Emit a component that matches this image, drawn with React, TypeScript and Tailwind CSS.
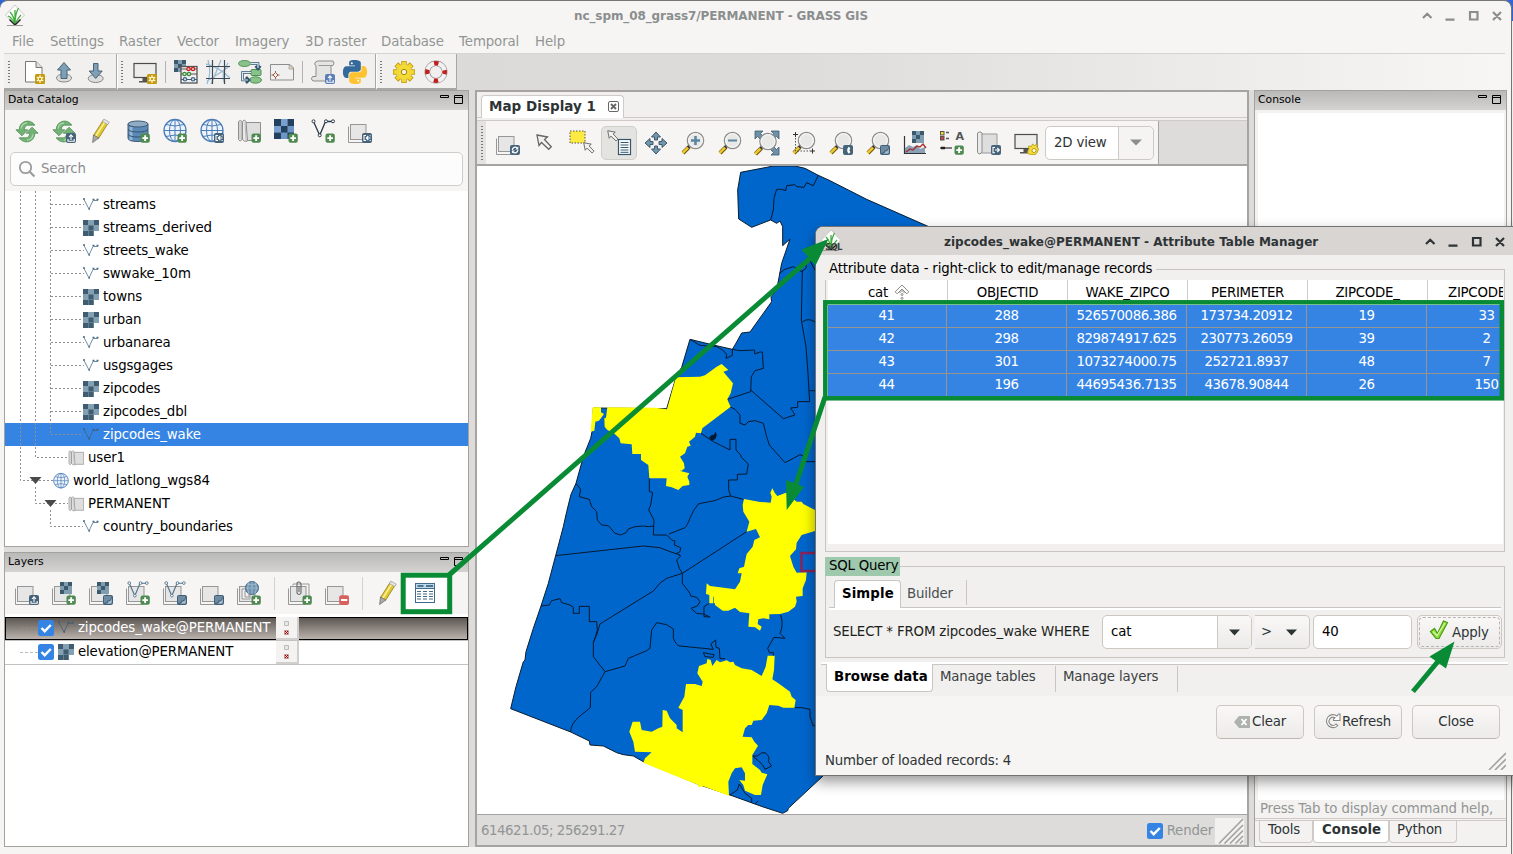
import React from "react";

type Kids = { children?: React.ReactNode };

const Icon = ({ children }: Kids) => (
  <svg width="24" height="24" viewBox="0 0 24 24" fill="none" className="block shrink-0 overflow-visible">
    {children}
  </svg>
);

const Plus = () => (
  <g>
    <rect x="14.5" y="14.5" width="9.3" height="9.3" rx="2" fill="#4f8a50" />
    <path d="M19.15 16.3v5.7M16.3 19.15h5.7" stroke="#fff" strokeWidth="1.9" />
  </g>
);
const Badge = ({ children, fill = "#45637a" }: Kids & { fill?: string }) => (
  <g>
    <rect x="14" y="14" width="10" height="10" rx="2" fill={fill} />
    {children}
  </g>
);
const UpBadge = ({ fill }: { fill?: string }) => (
  <Badge fill={fill}>
    <path d="M19 21v-4.5M17 18l2-2.2 2 2.2M16 20v2.2h6.2V20" stroke="#fff" strokeWidth="1.1" />
  </Badge>
);
const LinkBadge = () => (
  <Badge>
    <path d="M18 16.5h-2v5h2M22.5 19h-4M20.3 17l-2 2 2 2M22.2 16.3v1M22.2 21v1" stroke="#fff" strokeWidth="1.1" />
  </Badge>
);
const PageBadge = () => (
  <g>
    <rect x="14" y="14" width="10" height="10" rx="2" fill="#3f5f79" />
    <path d="M22.8 15.2c.2 3.6-1.4 5.4-3.6 5.4.2 1.2-.8 2.2-3.4 2.2h5.6q1.4 0 1.4-1.4z" fill="#a9bccb" />
    <path d="M15 15h7.5c0 3-1.5 4.5-4 4.5q0 2-3.5 2.5z" fill="#6e8ba1" />
  </g>
);
const GearBadge = () => (
  <g>
    <rect x="14" y="14" width="10" height="10" rx="1.5" fill="#c39a0e" />
    <path d="M19 15.3v7.4M15.8 17.1l6.4 3.7M15.8 20.9l6.4-3.7" stroke="#fff7cf" strokeWidth="1.5" />
    <circle cx="19" cy="19" r="2.3" fill="#fff7cf" />
    <circle cx="19" cy="19" r="1.2" fill="#c39a0e" />
  </g>
);
const Sheets = () => (
  <g stroke="#979797">
    <path d="M.5 7.5v16h17" strokeWidth="1" />
    <rect x="2.5" y="5.5" width="15.5" height="15" fill="#e6e6e6" />
  </g>
);
const Checker = ({ x, y, s, dark = "#3d5a6c", light = "#7f9db0" }: { x: number; y: number; s: number; dark?: string; light?: string }) => (
  <g>
    <rect x={x} y={y} width={s * 3} height={s * 3} fill={light} />
    <path
      d={`M${x} ${y}h${s}v${s}h${-s}zM${x + 2 * s} ${y}h${s}v${s}h${-s}zM${x + s} ${y + s}h${s}v${s}h${-s}zM${x} ${y + 2 * s}h${s}v${s}h${-s}z`}
      fill={dark}
    />
  </g>
);
const VLine = ({ c = "#2b3a48" }: { c?: string }) => (
  <g stroke={c} strokeWidth="1.3">
    <path d="M2.5 2.5L8.7 16.3 14.5 2.5H22" />
    <g fill="#fff" strokeWidth="1">
      <circle cx="2.5" cy="2.3" r="1.5" />
      <circle cx="8.7" cy="16.3" r="1.5" />
      <circle cx="15" cy="2.3" r="1.5" />
      <circle cx="22" cy="2.3" r="1.5" />
    </g>
  </g>
);
const Globe = () => (
  <g stroke="#4a7db8" strokeWidth="1">
    <circle cx="12" cy="11.5" r="11" fill="#edf3fa" strokeWidth="1.3" />
    <ellipse cx="12" cy="11.5" rx="5.5" ry="11" />
    <path d="M12 .5v22M1 11.5h22M3 5.5q9 3 18 0M3 17.5q9-3 18 0" />
  </g>
);
const Pencil = () => (
  <g>
    <path d="M4.5 16.5L14.5.8l5 2.8L9.5 19.5z" fill="#e0c62f" stroke="#8e7c20" strokeWidth=".8" />
    <path d="M6.5 17.5L16.5 2" stroke="#fbf19a" strokeWidth="1.5" />
    <path d="M13.3 2.6l1.7-2.5 5.4 3-1.6 2.5z" fill="#e3e0e0" stroke="#999" strokeWidth=".6" />
    <path d="M4.5 16l-.9 7.6L9.8 19z" fill="#aaa" stroke="#666" strokeWidth=".7" />
  </g>
);
const Recycle = () => (
  <g fill="#74b176" stroke="#4f9155" strokeWidth=".8" strokeLinejoin="round">
    <path d="M19.8 6.200C17.500 2.600 13.500 1.400 10 2.500 6.500 3.500 4.300 6.600 4.200 10.800H.900L7 16.800l5.800-6H9.300C9.300 8.300 10.500 6.600 12.500 6.200z" />
    <path d="M4.200 18.800C6.500 22.400 10.500 23.600 14 22.500c3.500-1 5.700-4.100 5.800-8.300h3.300L17 8.200l-5.800 6h3.500c0 2.500-1.200 4.200-3.200 4.600z" />
    <path d="M6 9.800Q6.500 4.500 12 3.800M18 15.200q-.5 5.300-6 6" stroke="#aedbab" strokeWidth="1.2" fill="none" />
  </g>
);
const Mapset = () => (
  <g stroke="#8e8e8e" strokeWidth="1">
    <path d="M8 3.5h15.5v18H10z" fill="#dedede" />
    <path d="M1.5 2.5q1.500-2 3.500 0v18q-2 3-3.500 0zM9 2.500q-2-3-3.500 0v18q2 3 5 1.500z" fill="#e9e9e9" />
    <path d="M3 3v17M8 3l1 18" stroke="#bbb" />
  </g>
);
const Arrow = ({ x = 0, y = 0, k = 1 }: { x?: number; y?: number; k?: number }) => (
  <path
    transform={`translate(${x} ${y}) scale(${k})`}
    d="M1 1l10.500 2-3 2.500 6.800 7.200-2.600 2.600L5.500 8.500 3 11.500z"
    fill="#f2f1ee"
    stroke="#666"
    strokeWidth="1.3"
  />
);
const Lens = () => (
  <g>
    <path d="M2 22l6-6" stroke="#6a5a10" strokeWidth="4" />
    <path d="M1.5 22.2l6-6" stroke="#f3c92f" strokeWidth="2.5" />
    <path d="M7 16.5l3.5-3.5" stroke="#333" strokeWidth="3" />
    <circle cx="14.5" cy="9.5" r="8.2" fill="#e8e8e6" stroke="#8b8b8b" strokeWidth="1.2" />
    <circle cx="14.5" cy="9.5" r="6.8" stroke="#fafafa" strokeWidth=".9" />
  </g>
);
const Monitor = () => (
  <g>
    <path d="M9.500 18h5v3h3v1.500H6V21h3.500z" fill="#555" />
    <rect x="1" y="3.5" width="22" height="14" fill="#ececea" stroke="#4c4c4c" strokeWidth="1.2" />
  </g>
);

const HandleV = ({ h = "h-[22px]" }: { h?: string }) => (
  <div className={`${h} w-[2px] shrink-0 bg-[repeating-linear-gradient(to_bottom,#777_0,#777_1.5px,transparent_1.5px,transparent_3px)]`} />
);
const Sep = ({ h = "h-[22px]", c = "bg-[#b3b2b0]" }: { h?: string; c?: string }) => <div className={`w-px shrink-0 ${h} ${c}`} />;

const TopBar = () => (
  <div className="ml-1 mr-[6px] flex h-[37px] items-start border-t border-[#d5d4d1] bg-gradient-to-r from-[#dad9d7] via-[#dcdbd9] to-[#f7f6f5]">
    <div className="flex h-[36px] w-[113px] items-center gap-2 border-b-2 border-r border-[#a8a7a5] bg-[#f1f0ee] pl-1 pt-[2px]">
      <HandleV />
      <div className="ml-[3px]">
        <Icon>
          <path d="M4.500 1.500h10.500l6 6v14.500H4.500z" fill="#fff" stroke="#777" />
          <path d="M15 1.500v6h6" fill="#ddd" stroke="#777" />
          <GearBadge />
        </Icon>
      </div>
      <Icon>
        <ellipse cx="11" cy="18" rx="7.5" ry="4" fill="#ddd" stroke="#888" />
        <path d="M8 18.500V10H4.500L11 2.500 17.500 10H14v8.500z" fill="#7f9fb5" stroke="#45637a" />
      </Icon>
      <Icon>
        <ellipse cx="10.7" cy="18.5" rx="7.5" ry="4" fill="#ddd" stroke="#888" />
        <path d="M8.500 3.500V11H4.200l6.500 7.500 6.500-7.500H13V3.500z" fill="#7f9fb5" stroke="#45637a" />
      </Icon>
    </div>
    <div className="flex h-[36px] w-[259px] items-center gap-2 border-b-2 border-l border-r border-b-[#a8a7a5] border-l-white border-r-[#a8a7a5] bg-[#f1f0ee] pl-[3px] pt-[2px]">
      <HandleV />
      <div className="ml-[2px]"><Icon><Monitor /><GearBadge /></Icon></div>
      <Sep />
      <Icon>
        <Checker x={0} y={0} s={4} />
        <rect x="7" y="6.5" width="16" height="16.5" fill="#f0eeee" stroke="#555" strokeWidth="1.3" />
        <path d="M7 9h16M7 14h16M7 19.500h16" stroke="#555" />
        <g strokeWidth="1.2">
          <circle cx="14.5" cy="9" r="1.7" fill="#f7bbbb" stroke="#c22" /><circle cx="19" cy="9" r="1.7" fill="#f7bbbb" stroke="#c22" />
          <circle cx="10.5" cy="14" r="1.7" fill="#cfe8cf" stroke="#3c8a3c" /><circle cx="15" cy="14" r="1.7" fill="#cfe8cf" stroke="#3c8a3c" />
          <circle cx="11" cy="19.3" r="1.7" fill="#cfe0ee" stroke="#39698f" /><circle cx="19" cy="19.3" r="1.7" fill="#cfe0ee" stroke="#39698f" />
        </g>
      </Icon>
      <Icon>
        <path d="M2 0q4 13-1 24M15 0q-5 13-10 24M22 3q-8 12-3 21M0 4q13 3 24 14M1 21q10-6 23-15" stroke="#9bbbd3" strokeWidth="1.3" />
        <path d="M6.500 0v24M18.500 0v24M0 6.500h24M0 18.500h24" stroke="#3d4a55" strokeWidth="1.2" />
      </Icon>
      <Icon>
        <g fill="#8ac28b" stroke="#4d9350"><ellipse cx="6.5" cy="3.5" rx="6" ry="3" /><rect x="13" y="9.5" width="10" height="6" rx="1" /><ellipse cx="17.5" cy="20" rx="6" ry="3.2" /></g>
        <path d="M12.500 3.500H20v4M17.500 6l2.500 3 2.500-3M13 12.500H4.500V20h5M8 17l3 3-3 3" stroke="#33576e" strokeWidth="2.6" />
        <path d="M12.500 3.500H20v4.500M13 12.500H4.500V20h5.500" stroke="#dce8f0" strokeWidth="1.2" />
      </Icon>
      <Icon>
        <path d="M.5 4.500H20l3.500 3.500v12H.5z" fill="#f0efef" stroke="#8d8d8d" />
        <path d="M19 4.500v4.500h4.500z" fill="#ead5c1" stroke="#999" strokeWidth=".7" />
        <path d="M5.500 11v8M1.500 15h8" stroke="#9c5a3c" /><path d="M5.500 12.500L8 15l-2.500 2.500L3 15z" fill="#f0efef" stroke="#9c5a3c" />
      </Icon>
      <Sep />
      <Icon>
        <path d="M4.500 2Q7 .5 9 1h13q2 2 0 4.500h-2V21H2q-3-2-.5-4.500H5V6Q2.500 4 4.500 2z" fill="#e4e4e3" stroke="#8b8b8b" />
        <path d="M7.500 5.500h13" stroke="#999" /><UpBadge fill="#5b7db5" />
      </Icon>
      <Icon>
        <path fill="#34699a" d="M14.250.18l.9.2.73.26.59.3.45.32.34.34.25.34.16.33.1.3.04.26.02.2-.01.13V8.500l-.05.63-.13.55-.21.46-.26.38-.3.31-.33.25-.35.19-.35.14-.33.1-.3.07-.26.04-.21.02H8.770l-.69.05-.59.14-.5.22-.41.27-.33.32-.27.35-.2.36-.15.37-.1.35-.07.32-.04.27-.02.21v3.060H3.170l-.21-.03-.28-.07-.32-.12-.35-.18-.36-.26-.36-.36-.35-.46-.32-.59-.28-.73-.21-.88-.14-1.050-.05-1.230.06-1.220.16-1.040.24-.87.32-.71.36-.57.4-.44.42-.33.42-.24.4-.16.36-.1.32-.05.24-.01h.16l.06.01h8.160v-.83H6.180l-.01-2.750-.02-.37.05-.34.11-.31.17-.28.25-.26.31-.23.38-.2.44-.18.51-.15.58-.12.64-.1.71-.06.77-.04.84-.02 1.270.05z" />
        <path fill="#ffc331" d="M21.040 6.110l.28.06.32.12.35.18.36.27.36.35.35.47.32.59.28.73.21.88.14 1.040.05 1.230-.06 1.230-.16 1.040-.24.86-.32.71-.36.57-.4.45-.42.33-.42.24-.4.16-.36.09-.32.05-.24.02-.16-.01h-8.220v.82h5.840l.01 2.760.02.36-.05.34-.11.31-.17.29-.25.25-.31.24-.38.2-.44.17-.51.15-.58.13-.64.09-.71.07-.77.04-.84.01-1.270-.04-1.070-.14-.9-.2-.73-.25-.59-.3-.45-.33-.34-.34-.25-.34-.16-.33-.1-.3-.04-.25-.02-.2.01-.13v-5.340l.05-.64.13-.54.21-.46.26-.38.3-.32.33-.24.35-.2.35-.14.33-.1.3-.06.26-.04.21-.02.13-.01h5.840l.69-.05.59-.14.5-.21.41-.28.33-.32.27-.35.2-.36.15-.36.1-.35.07-.32.04-.28.02-.21V6.070h2.090z" />
        <circle cx="8.8" cy="3.2" r="1" fill="#fff" /><circle cx="15.2" cy="20.8" r="1" fill="#fff" />
      </Icon>
    </div>
    <div className="flex h-[36px] w-[81px] items-center gap-2 border-b-2 border-l border-r border-b-[#a8a7a5] border-l-white border-r-[#a8a7a5] bg-[#f1f0ee] pl-[3px] pt-[2px]">
      <HandleV />
      <div className="ml-[2px]">
        <Icon>
          <g stroke="#c09a10" strokeWidth="5.5"><path d="M12 1v22M1 12h22M4.300 4.300l15.400 15.400M4.300 19.700L19.700 4.300" /></g>
          <g stroke="#f2d22e" strokeWidth="4"><path d="M12 1.700v20.600M1.700 12h20.600M4.800 4.800l14.400 14.400M4.800 19.200L19.200 4.800" /></g>
          <circle cx="12" cy="12" r="7.5" fill="#f4da35" /><circle cx="12" cy="12" r="2.7" fill="#f6f3e6" stroke="#a98708" />
        </Icon>
      </div>
      <Icon>
        <circle cx="12" cy="12" r="8.7" stroke="#8a8a8a" strokeWidth="5.5" />
        <circle cx="12" cy="12" r="8.7" stroke="#f1f1f1" strokeWidth="4.2" />
        <circle cx="12" cy="12" r="8.7" stroke="#c31d1d" strokeWidth="4.4" strokeDasharray="4.4 9.266" strokeDashoffset="2.2" />
      </Icon>
    </div>
  </div>
);

const Caption = ({ title }: { title: string }) => (
  <div className="flex h-[19px] shrink-0 items-start justify-between bg-gradient-to-b from-[#b9b9b7] to-[#d4d3d1] pl-[3px] pr-[5px]">
    <span className="text-[10.8px] leading-[17px] tracking-normal text-black">{title}</span>
    <svg width="23" height="12" viewBox="0 0 23 12" fill="none" stroke="#000" className="mt-[2px]">
      <path d="M.5 2.500h8v2h-8zM14.500 2.500h8v8h-8zM14.500 4.500h8" />
    </svg>
  </div>
);

const VectorIcon = ({ c = "#6f8ea6", c2 = "#4b6a82" }: { c?: string; c2?: string }) => (
  <svg width="16" height="16" viewBox="0 0 16 16" fill="none" className="block shrink-0">
    <path d="M1 2.500l5 9.500 4-8.500h5" stroke={c} strokeWidth="1" />
    <path d="M0 2h2M9.500 2.500h2M13.500 2.500h2M5.500 12h1.500" stroke={c2} strokeWidth="1.6" />
  </svg>
);
const RasterIcon = () => (
  <svg width="16" height="16" viewBox="0 0 16 16" className="block shrink-0">
    <path d="M0 0h16v11h-5v5H0z" fill="#84a0b3" />
    <path d="M0 0h5v5H0zM11 0h5v5h-5zM5.500 5.500h5v5h-5zM0 11h5v5H0zM5.500 11h5v5h-5z" fill="#3f5c70" />
  </svg>
);
const FolderIcon = () => (
  <svg width="16" height="16" viewBox="0 0 24 24" fill="none" className="block shrink-0"><Mapset /></svg>
);
const GlobeIcon = () => (
  <svg width="16" height="16" viewBox="0 0 24 24" fill="none" className="block shrink-0"><Globe /></svg>
);

const nodes: { name: string; kind: "v" | "r" | "m" | "g"; depth: number }[] = [
  { name: "streams", kind: "v", depth: 3 },
  { name: "streams_derived", kind: "r", depth: 3 },
  { name: "streets_wake", kind: "v", depth: 3 },
  { name: "swwake_10m", kind: "v", depth: 3 },
  { name: "towns", kind: "r", depth: 3 },
  { name: "urban", kind: "r", depth: 3 },
  { name: "urbanarea", kind: "v", depth: 3 },
  { name: "usgsgages", kind: "v", depth: 3 },
  { name: "zipcodes", kind: "r", depth: 3 },
  { name: "zipcodes_dbl", kind: "r", depth: 3 },
  { name: "zipcodes_wake", kind: "v", depth: 3 },
  { name: "user1", kind: "m", depth: 2 },
  { name: "world_latlong_wgs84", kind: "g", depth: 1 },
  { name: "PERMANENT", kind: "m", depth: 2 },
  { name: "country_boundaries", kind: "v", depth: 3 },
];

const Tree = () => (
  <div className="relative min-h-0 flex-1 overflow-hidden bg-white pt-[2px]">
    {nodes.map((n) => {
      const sel = n.name === "zipcodes_wake";
      const pad = n.depth === 3 ? "pl-[78px]" : n.depth === 2 ? "pl-[63px]" : "pl-[48px]";
      return (
        <div key={n.name} className={`flex h-[23px] items-center gap-1 ${pad} ${sel ? "bg-[#3584e4] text-white" : "text-black"}`}>
          {n.kind === "v" ? <VectorIcon c={sel ? "#3f6890" : undefined} c2={sel ? "#3b5f83" : undefined} /> : n.kind === "r" ? <RasterIcon /> : n.kind === "m" ? <FolderIcon /> : <GlobeIcon />}
          <span className="tracking-[-0.12px]">{n.name}</span>
        </div>
      );
    })}
    <svg width="90" height="355" viewBox="5 191 90 355" fill="none" className="absolute left-0 top-0">
      <g stroke="#8f8f8f" strokeDasharray="2 2">
        <path d="M20.500 191V480.500H53M35.500 191V457.500H68M50.500 191V434.500H83M35.500 487V503.500H68M50.500 510V526.500H83" />
        <path d="M51 204.500h33M51 227.500h33M51 250.500h33M51 273.500h33M51 296.500h33M51 319.500h33M51 342.500h33M51 365.500h33M51 388.500h33M51 411.500h33" />
      </g>
      <path d="M29.500 477h12l-6 7zM44.500 500h12l-6 7z" fill="#4a4a4a" />
    </svg>
  </div>
);

const Catalog = () => (
  <div className="flex h-[457px] flex-col border border-[#a3a29f] bg-[#f6f5f3]">
    <Caption title="Data Catalog" />
    <div className="flex h-[42px] items-center gap-[13px] pl-[10px]">
      <Icon><Recycle /></Icon>
      <Icon><Recycle /><UpBadge /></Icon>
      <Icon><Pencil /></Icon>
      <Icon>
        <path d="M2 5v14q0 3.500 10 3.500T22 19V5z" fill="#5d89b6" stroke="#3d5c78" />
        <path d="M5 8v13" stroke="#93b5d8" strokeWidth="3" />
        <ellipse cx="12" cy="5" rx="10" ry="3" fill="#92abc4" stroke="#3d5c78" />
        <path d="M2 10.500q2 2.500 10 2.500t10-2.500M2 15.500q2 2.500 10 2.500t10-2.500" stroke="#34536f" />
        <Plus />
      </Icon>
      <Icon><Globe /><Plus /></Icon>
      <Icon><Globe /><LinkBadge /></Icon>
      <Icon><Mapset /><Plus /></Icon>
      <Icon>
        <rect width="20" height="20" fill="#6d95c6" />
        <path d="M0 0h7v7H0zM13.500 0h6.500v7h-6.500zM7 7h6.500v6.500H7zM0 13.500h7V20H0zM13.500 13.500H20V20h-6.500z" fill="#23405f" />
        <path d="M7 0h6.500v7H7zM0 7h7v6.500H0z" fill="#84a8d4" opacity=".6" />
        <Plus />
      </Icon>
      <Icon><VLine /><Plus /></Icon>
      <Icon><Sheets /><LinkBadge /></Icon>
    </div>
    <div className="mx-[5px] flex h-[34px] items-center gap-[5px] rounded-[5px] border border-[#cfccc9] bg-[#fcfcfc] pl-[7px] text-[#8b8e8f]">
      <svg width="18" height="18" viewBox="0 0 18 18" fill="none" stroke="#9b9d9d" strokeWidth="1.8"><circle cx="7.5" cy="7.5" r="5.7" /><path d="M11.500 11.500l5 5" strokeWidth="2.2" /></svg>
      <span>Search</span>
    </div>
    <div className="h-[5px]" />
    <Tree />
  </div>
);

const LayerRow = ({ name, kind, active }: { name: string; kind: "v" | "r"; active?: boolean }) => (
  <div className="flex h-[24px] items-center border-b border-[#c4c3c1] bg-white">
    <div
      className={`flex h-[23px] w-[271px] shrink-0 items-center ${active ? "border border-r-0 border-black bg-gradient-to-b from-[#5e5854] to-[#bab3ad] pb-[2px] pl-[14px] text-white" : "pb-[1px] pl-[15px] text-black"}`}
    >
      <span className={`w-[18px] shrink-0 border-t border-dashed ${active ? "border-[#8c8782]" : "border-[#bbb]"}`} />
      <svg width="16" height="16" viewBox="0 0 16 16" fill="none" className="mr-1 shrink-0">
        <rect width="16" height="16" rx="2.5" fill="#3584e4" />
        <path d="M3.500 8l3.200 3.200L12.800 5" stroke="#fff" strokeWidth="2.4" />
      </svg>
      {kind === "v" ? <VectorIcon c="#4c6274" c2="#445a6c" /> : <RasterIcon />}
      <span className="ml-1 whitespace-nowrap tracking-[-0.14px]">{name}</span>
    </div>
    <div className="flex h-[23px] w-[23px] shrink-0 flex-col items-center justify-center border-b-2 border-r-2 border-[#d0cfcd] bg-[#f4f3f1]">
      <svg width="6" height="14" viewBox="0 0 6 14"><path d="M.5.5h4v4h-4z" fill="#e8e8e8" stroke="#bbb" /><path d="M.5 9.500h4v4h-4z" fill="#e8c8c8" stroke="#b99" /><path d="M1 10l3 3M4 10l-3 3" stroke="#a00" /></svg>
    </div>
    <div className={`h-[23px] flex-1 ${active ? "border border-l-0 border-black bg-gradient-to-b from-[#5e5854] to-[#bab3ad]" : ""}`} />
  </div>
);

const Layers = () => (
  <div className="flex h-[295px] flex-col border border-[#a3a29f] bg-white">
    <Caption title="Layers" />
    <div className="flex h-[42px] items-center gap-[13px] bg-[#f6f5f3] pl-[10px]">
      <Icon><Sheets /><UpBadge /></Icon>
      <Icon><Sheets /><Checker x={8} y={1} s={4} /><Plus /></Icon>
      <Icon><Sheets /><Checker x={8} y={1} s={4} /><PageBadge /></Icon>
      <Icon><Sheets /><g transform="translate(1 0) scale(.9)"><VLine c="#527590" /></g><Plus /></Icon>
      <Icon><Sheets /><g transform="translate(1 0) scale(.9)"><VLine c="#527590" /></g><PageBadge /></Icon>
      <Icon><Sheets /><PageBadge /></Icon>
      <Icon>
        <Sheets /><path d="M5 8h8v10H5zM8 10h4v6H8z" fill="#eee" stroke="#999" />
        <circle cx="15" cy="7" r="6.5" fill="#6f93b0" stroke="#3f6685" /><path d="M15 .5v13M8.500 7h13M10 3q5 2 10 0M12 1q-3 6 0 12M18 1q3 6 0 12" stroke="#a8c1d4" strokeWidth=".8" />
        <Plus />
      </Icon>
      <Sep h="h-[33px]" c="bg-[#d4d2cf]" />
      <Icon><Sheets /><path d="M5 4.500V3h16v15h-2" stroke="#999" /><path d="M9 5v7q2 3 4 0V3q-1.500-3.500-4-1v3M11 5v6" stroke="#666" strokeWidth="1.1" /><Plus /></Icon>
      <Icon><Sheets /><rect x="14.2" y="14.2" width="9.8" height="9.8" rx="2" fill="#d8605f" /><path d="M16 19h6.300" stroke="#fff" strokeWidth="2" /></Icon>
      <Sep h="h-[33px]" c="bg-[#d4d2cf]" />
      <Icon><Pencil /></Icon>
      <div className="-ml-[10px] mt-[2px] flex h-[36px] w-[46px] items-center justify-center bg-white pr-[2px]">
        <Icon>
          <rect x="2.5" y="1.5" width="19" height="19" fill="#fff" stroke="#456a87" />
          <path d="M3 2h18v4H3z" fill="#b9dbf0" /><path d="M4.500 4h6M13 4h7" stroke="#2f516c" strokeWidth="1.7" />
          <path d="M3 6.500h18" stroke="#456a87" />
          <path d="M4 9.500h4M10 9.500h4M16 9.500h4M4 12h4M10 12h4M16 12h4M4 14.500h4M10 14.500h4M16 14.500h4M4 17h4M10 17h4M16 17h4" stroke="#456a87" strokeWidth="1.2" />
        </Icon>
      </div>
    </div>
    <div className="h-[3px]" />
    <LayerRow name="zipcodes_wake@PERMANENT" kind="v" active />
    <LayerRow name="elevation@PERMANENT" kind="r" />
  </div>
);

const MapCanvas = () => (
  <svg viewBox="477 166 770 648" width="770" height="648" className="block bg-white" fill="none">
    <g transform="translate(500 160) scale(.33333)" strokeLinejoin="round">
      <path
        d="M722 37L800 22 820 18H885L915 25 955 46 990 62 1100 118 1284 199 1500 300 1500 1500 1100 1720 969 1848 865 1945 863 1952 848 1960 787 1940 690 1905 600 1875 540 1850 430 1805 400 1788 370 1784 350 1778 310 1758 270 1755 268 1743 212 1716 32 1646 48 1580 70 1505 75 1500 78 1475 100 1405 123 1338 145 1270 167 1187 190 1100 200 1055 213 1003 228 970 250 890 272 835 276 815 280 744 500 746 528 652 545 622 570 538 640 555 697 568 705 555 725 519 750 516 765 495 815 425 813 410 830 390 845 310 870 237 848 257V200L840 183 830 190 812 180 755 202 716 177 713 90z"
        fill="#0066cc"
        stroke="#0a1c2c"
        strokeWidth="3"
      />
      <g stroke="#06182c" strokeWidth="3">
        <path d="M955 46L940 77 920 68 912 82 890 80 885 74 860 77 857 92 845 88 830 88 822 115 820 150 812 180M838 340L855 328 880 320 905 335 918 325 920 305 930 302 945 330M907 330L904 480 918 560 924 640 929 725H893L893 742 872 744 885 765 850 776 752 690M907 486Q925 472 945 486M929 692h16M915 905h30M570 538L600 556 650 560 668 570 680 583 678 595 697 586 697 568 720 572 764 570 764 582 780 576 787 576 790 625 765 632 754 650 752 695 682 718M682 718L690 740 705 748 720 765 720 790 735 795 745 785 765 782 790 790 800 830 808 855 855 908 880 895 900 884 910 888M603 820L640 845 690 870V838H708V870L722 885 724 892 745 912 740 942 712 943V960H686V990L692 1008 730 1018M692 1008Q670 1008 645 1022 610 1028 595 1032 580 1050 572 1070 560 1100 555 1103L507 1122" />
        <path d="M628 832q5-8 15-8l3-8 4 8-4 12-10 6z" fill="#06182c" strokeWidth="1" />
        <path d="M448 955V995L458 997 452 1035 446 1050 462 1080 460 1125H500L515 1140 525 1143 523 1155 542 1163 540 1175 530 1180 542 1188 530 1200 538 1225 547 1240V1270L570 1300 572 1308 590 1312 600 1325 592 1338 573 1345 590 1360 610 1362 630 1371 612 1370 612 1340 628 1330M228 970L242 988 238 1010 268 1018 275 1040 290 1055 292 1080 305 1095 325 1097 345 1120 362 1125 378 1118 385 1107 405 1100 430 1098 445 1100 462 1098" />
        <path d="M167 1187L330 1169 430 1158 480 1163 510 1175 540 1185M740 1115L547 1240 500 1255Q480 1265 460 1293L300 1392 290 1425 280 1445V1490L315 1535 375 1518 385 1495 440 1472 450 1465 455 1410 470 1388 500 1394 520 1407 520 1435Q530 1458 540 1458L590 1463 640 1468 632 1452 647 1440 648 1462 658 1465 660 1496 676 1496M315 1535L290 1580 272 1597 271 1643 240 1668Q212 1690 212 1716M123 1338L148 1335 155 1322 180 1316 185 1328 210 1335 220 1342V1360H238V1339H268V1385H290L292 1410 282 1445M842 1365Q852 1395 840 1420L855 1435 822 1432 803 1465 808 1478 820 1478V1488M610 1478L642 1484 640 1492 615 1490zM885 1643L905 1643 930 1648 930 1670 940 1698 950 1695M757 1788H772Q785 1775 795 1778 812 1790 805 1805L815 1818 795 1828 788 1815 775 1802zM690 1905L712 1890 718 1872 735 1900 755 1915V1928M765 1932L775 1922" />
      </g>
      <g fill="#ffff00">
        <path d="M278 742H303V757L312 762 297 782 286 785 283 812 272 815z" />
        <path d="M322 742L465 743 501 748 528 652 600 650 615 646 650 620 665 612 685 630 670 635 699 670 692 700 682 718 692 740 607 805 603 820 588 818 585 830 567 845 572 857 562 860 555 880 540 890 552 910 554 925 545 932 538 932 568 940 562 950 568 965 568 975 548 978 535 990 515 982 498 978 500 955H448L445 915 423 900V882H397L395 853 362 850 358 835 340 818 322 810 314 800 313 775 318 773z" />
        <path d="M732 1017L780 1026 812 1028 815 1010 811 998 817 985 825 1000 832 1008 858 998 890 1025 905 1025 910 1032 945 1050 1000 1060V1100L945 1113 905 1125 890 1148 888 1168 870 1188 880 1220 890 1238 920 1237 918 1260 908 1285 908 1308 888 1310 890 1325 885 1340 865 1355 840 1362 808 1363 808 1378 790 1375 775 1378 773 1392 785 1400 780 1412 765 1402 745 1400 748 1360 720 1356 705 1343 685 1352 668 1352 645 1335 645 1330 641 1330V1310H639V1330H628V1305L618 1302 620 1270 630 1278 660 1282 705 1288 720 1265 725 1240 713 1240 718 1225 732 1220 740 1182 758 1160 763 1140 780 1132 768 1107 740 1115 748 1085 730 1055 728 1035z" />
        <path d="M803 1487H824L822 1530 817 1558 835 1570 870 1595 875 1610 887 1620 883 1643 850 1643 835 1637 808 1635 800 1660 785 1680 760 1682 755 1695 745 1695 735 1705 728 1730 755 1732 763 1745 774 1757 757 1785 757 1812 780 1830 785 1838 802 1843 788 1875 783 1905H765L735 1892 730 1875 718 1860 735 1862V1840L725 1822 705 1825 695 1840 685 1865 687 1907 610 1879 596 1882 594 1874 540 1853 430 1808 435 1795 455 1777 405 1775 400 1745 388 1715 398 1685 420 1685 425 1710 455 1715 475 1705 487 1700 488 1650 500 1652 510 1675 530 1695 530 1705 548 1717V1650L535 1643 553 1610 558 1572 585 1572 605 1578 608 1565 592 1540 597 1518 620 1510 622 1497 632 1500 637 1518 650 1500 660 1507 680 1501 690 1507 700 1505 705 1515 725 1525 755 1530 785 1548 797 1520z" />
      </g>
    </g>
    <rect x="801.5" y="553" width="40" height="18" stroke="#9b1c4d" strokeWidth="2.5" opacity=".9" />
  </svg>
);

const MapToolbar = () => (
  <div className="flex h-[46px] shrink-0 border-b-2 border-t border-b-[#a5a4a2] border-t-[#cfcac5] bg-[#dddcda]">
    <div className="flex h-full w-[682px] items-center gap-[13px] border-r border-[#a5a4a2] bg-[#f6f5f3]">
      <div className="flex h-full w-[9px] shrink-0 items-center justify-center bg-[#e4e3e1]"><HandleV h="h-[34px]" /></div>
      <div className="-ml-[3px]"><Icon><Sheets /><Badge><path d="M16.300 19a3 3 0 0 1 5-2M21.900 19a3 3 0 0 1-5 2" stroke="#fff" strokeWidth="1.3" /><path d="M22.300 15.500v3h-3zM15.900 22.500v-3h3z" fill="#fff" /></Badge></Icon></div>
      <Icon><g transform="translate(3 3)"><Arrow /></g></Icon>
      <Icon>
        <rect x="0" y="0" width="15" height="12" fill="#fdea43" stroke="#555" strokeDasharray="1.5 1.5" />
        <Arrow x={13} y={11} k={0.72} />
      </Icon>
      <div className="-mx-[6px] flex h-[34px] w-[36px] shrink-0 items-center justify-center rounded-[5px] border border-[#cfcecb] bg-[#e3e3df]">
        <Icon>
          <Arrow x={0} y={-1} k={0.72} />
          <rect x="11.5" y="8.5" width="12" height="15" fill="#fff" stroke="#34576f" strokeWidth="1.2" />
          <path d="M13.500 11.500h8M13.500 14h8M13.500 16.500h8M13.500 19h8M13.500 21.300h8" stroke="#34576f" />
        </Icon>
      </div>
      <Icon>
        <path d="M12 1l4.500 5H13.500v3h-3v-3H7.500zM12 23l4.500-5H13.500v-3h-3v3H7.500zM1 12l5-4.500v3h3v3H6v3zM23 12l-5-4.500v3h-3v3h3v3z" fill="#7596ac" stroke="#3a596d" />
      </Icon>
      <Icon><Lens /><path d="M14.500 5v9M10 9.500h9" stroke="#5d86a1" strokeWidth="2.6" /></Icon>
      <Icon><Lens /><path d="M10 9.500h9" stroke="#5d86a1" strokeWidth="2.2" /></Icon>
      <Icon>
        <path d="M0 0h8L5.500 2.500l4 4-3 3-4-4L0 8zM24 0h-8l2.500 2.500-4 4 3 3 4-4L24 8zM24 24h-8l2.500-2.500-4-4 3-3 4 4L24 16z" fill="#6f8fa6" stroke="#3d5c72" strokeWidth=".8" />
        <g transform="translate(-1.500 1)"><Lens /></g>
      </Icon>
      <Icon><Lens /><path d="M3.500 1v5M1 3.500h5M20.500 17.500v5M18 20h5" stroke="#333" /><path d="M3.500 7v13H18" stroke="#555" strokeDasharray="1.5 1.5" /></Icon>
      <Icon><Lens /><Badge><path d="M20.500 16.500a4 4 0 0 0 0 5.400" stroke="#fff" strokeWidth="2.2" /></Badge></Icon>
      <Icon><Lens /><PageBadge /></Icon>
      <Icon>
        <Checker x={9} y={0} s={4} />
        <path d="M2 23v-6l4-3 4 2 4-2 3 4 5-2v7z" fill="#8aa2b5" />
        <path d="M1.500 5v17.500H23" stroke="#333" strokeWidth="1.2" /><path d="M3 21l4-3 3 1 4-4 3 1 3-3 3 4" stroke="#a82a2a" strokeWidth="1.3" />
      </Icon>
      <Icon>
        <rect x=".5" y=".5" width="3.5" height="3.5" fill="#f2df25" stroke="#555" /><rect x=".5" y="5.5" width="3.5" height="3.5" fill="#d04444" stroke="#555" />
        <path d="M6 1.500h3M6 7.500h3M0 17h12" stroke="#555" strokeWidth="1.3" /><path d="M1 17h4" stroke="#222" strokeWidth="2.5" />
        <text x="15.500" y="8.500" fontSize="11" fontWeight="bold" fill="#555">A</text>
        <Plus />
      </Icon>
      <Icon><path d="M4 3h16v19H4z" fill="#dedede" stroke="#999" /><path d="M.5 2Q3-.5 5 2v19l-2 2q-2 0-2.500-2z" fill="#e9e9e9" stroke="#8e8e8e" /><Badge><path d="M18 16.500h-2v5.200h2M18 19h4M20.300 17l2 2-2 2" stroke="#fff" strokeWidth="1.1" /></Badge></Icon>
      <Icon><Monitor /><path d="M18.500 13l2 1.500 2.500-1.500v3l1.500 2-1 3-2 2.500h-5l-3-1 .5-3 1-2-.5-2.500 3 .5z" fill="#f2dc3a" stroke="#b8970c" strokeWidth=".8" /><circle cx="20" cy="19.5" r="2" fill="#fff" stroke="#b8970c" /></Icon>
      <div className="-ml-[6px] flex h-[34px] w-[109px] shrink-0 rounded-[5px] border border-[#cdc9c5] bg-white">
        <span className="flex flex-1 items-center border-r border-[#cdc9c5] pl-2 text-[#2e3436]">2D view</span>
        <span className="flex w-[34px] items-center justify-center rounded-r-[5px] bg-[#f5f4f2]"><svg width="12" height="7" viewBox="0 0 12 7"><path d="M0 .5h12L6 6.500z" fill="#8b8e8f" /></svg></span>
      </div>
    </div>
  </div>
);

const MapPanel = () => (
  <div className="ml-[6px] flex h-[757px] w-[774px] shrink-0 flex-col border-2 border-[#a5a4a2] bg-[#f1f0ee]">
    <div className="mb-[2px] flex h-[26px] shrink-0 items-end border-b border-[#cfcac5] pl-1">
      <div className="-mb-px flex h-[23px] w-[143px] items-center justify-between rounded-t-[4px] border border-b-0 border-[#cfcac5] bg-white pl-[7px] pr-[3px]">
        <span className="mb-[2px] whitespace-nowrap text-[13.5px] font-bold tracking-[0.03px] text-[#2e3436]">Map Display 1</span>
        <svg width="12" height="12" viewBox="0 0 12 12" fill="none" stroke="#666"><rect x=".5" y=".5" width="10" height="10" rx="1.5" /><path d="M3 3l5 5M8 3L3 8" strokeWidth="1.8" /></svg>
      </div>
    </div>
    <MapToolbar />
    <div className="h-[648px] shrink-0 overflow-hidden"><MapCanvas /></div>
    <div className="flex flex-1 items-center justify-between border-t border-[#a5a4a2] bg-[#dddcda] pl-1 pt-[1px] text-[#929595]">
      <span className="tracking-[-0.45px]">614621.05; 256291.27</span>
      <span className="flex items-center pr-[3px]">
        <svg width="16" height="16" viewBox="0 0 16 16" fill="none"><rect width="16" height="16" rx="2.5" fill="#3584e4" /><path d="M3.500 8l3.200 3.200L12.800 5" stroke="#fff" strokeWidth="2.4" /></svg>
        <span className="ml-1 mr-[2px]">Render</span>
        <span className="flex h-[26px] w-[29px] items-end justify-end bg-[#f2f1ef]">
          <svg width="27" height="26" viewBox="0 0 27 26" stroke="#a3a29e" strokeWidth="1.6"><path d="M2 25.500L26 1M7.500 25.500L26 7M13 25.500L26 12.500M18.500 25.500L26 18M23 25.500l3-3" /></svg>
        </span>
      </span>
    </div>
  </div>
);

const ConsoleTabs = () => (
  <div className="flex h-[22px] pl-[4px] leading-[17px] text-[#2e3436]">
    <span className="w-[54px] rounded-b border border-t-0 border-[#cfcac5] pl-[8px]">Tools</span>
    <span className="w-[76px] rounded-b border border-t-0 border-[#cfcac5] bg-white pl-[8px] font-bold tracking-normal">Console</span>
    <span className="w-[68px] rounded-b border border-t-0 border-[#cfcac5] pl-[7px]">Python</span>
  </div>
);

const ConsoleArea = () => (
  <div className="ml-[5px] flex h-[757px] w-[253px] shrink-0 flex-col border border-[#a3a29f] bg-[#f3f2f0]">
    <Caption title="Console" />
    <div className="ml-[3px] mr-[2px] mt-[3px] h-[687px] shrink-0 bg-white" />
    <div className="h-[17px] shrink-0 overflow-hidden whitespace-nowrap pl-[5px] leading-[17px] text-[#929595]">Press Tab to display command help,</div>
    <div className="mt-[1px] h-[3px] shrink-0 border-b border-t border-[#cfcac5]" />
    <ConsoleTabs />
  </div>
);

const WindowButtons = ({ color, cls }: { color: string; cls: string }) => (
  <svg width="82" height="12" viewBox="0 0 82 12" fill="none" stroke={color} strokeWidth="2.2" className={cls}>
    <path d="M1 8l4.200-4.200L9.500 8M23.500 9.700h9M48 2h7.500v7.500H48zM71 2l8 8M79 2l-8 8" />
  </svg>
);

const Logo = ({ sql }: { sql?: boolean }) => (
  <svg width="22" height="24" viewBox="0 0 22 24" fill="none" className="block shrink-0 overflow-visible">
    <path d="M10 1l9.500 10L10 21 .5 11z" fill="#fff" stroke="#c8c8c8" />
    <path d="M10 20Q9 12 5 8M10 20Q10 10 13.500 4M10 20q3-6 6-9M9 18Q6 13 3 12M10 19V6" stroke="#3fae3c" strokeWidth="1.3" />
    <path d="M4.500 15.500l5.500 5.500 5.500-5.500" stroke="#222" strokeWidth="1.5" /><path d="M2 21.500h16" stroke="#999" />
    {sql && <text x="4" y="21" fontSize="8.5" fontWeight="bold" fill="#3c4140" letterSpacing="-0.7">SQL</text>}
  </svg>
);

const cols = ["cat", "OBJECTID", "WAKE_ZIPCO", "PERIMETER", "ZIPCODE_"];
const rows = [
  ["41", "288", "526570086.386", "173734.20912", "19", "33"],
  ["42", "298", "829874917.625", "230773.26059", "39", "2"],
  ["43", "301", "1073274000.75", "252721.8937", "48", "7"],
  ["44", "196", "44695436.7135", "43678.90844", "26", "150"],
];

const Button = ({ children }: Kids) => (
  <div className="flex h-[34px] w-[88px] items-center justify-center rounded-[5px] border border-[#cdc7c2] border-b-[#bfb8b1] bg-gradient-to-b from-[#f9f8f7] to-[#edebe9] text-[#2e3436]">{children}</div>
);
const Tri = () => <svg width="11" height="7" viewBox="0 0 11 7"><path d="M0 .5h11L5.500 6.500z" fill="#2e3436" /></svg>;

const Dialog = () => (
  <div className="absolute left-[815px] top-[226px] flex h-[550px] w-[706px] flex-col overflow-hidden rounded-tl-[8px] border border-[#757370] bg-[#f6f5f3] shadow-[0_6px_14px_rgba(0,0,0,0.4)]">
    <div className="relative flex h-[28px] shrink-0 items-center bg-[#d9d5d2] pl-[5px]">
      <Logo sql />
      <span className="ml-[101px] mt-[1px] whitespace-nowrap text-[12px] font-bold tracking-normal text-[#2e3436]">zipcodes_wake@PERMANENT - Attribute Table Manager</span>
      <WindowButtons color="#2e3436" cls="absolute left-[609px] top-[9px]" />
    </div>
    <div className="flex h-[441px] shrink-0 flex-col bg-[#f1f0ee]">
      <div className="ml-[9px] h-[297px] w-[680px] shrink-0">
        <div className="flex h-[25px] items-center">
          <span className="mt-[3px] whitespace-nowrap pl-1 leading-[20px] text-black">Attribute data - right-click to edit/manage records</span>
          <span className="ml-1 h-[11px] flex-1 self-end border-r border-t border-[#c9c5c0]" />
        </div>
        <div className="h-[272px] border border-t-0 border-[#c9c5c0] pl-[2px]">
          <div className="h-[264px] w-[675px] overflow-hidden bg-white">
            <div className="flex h-[23px] w-[720px]">
              {cols.map((c) => (
                <div key={c} className="flex w-[120px] shrink-0 items-center justify-center border-r border-[#cfcdca] pt-[3px] text-black">
                  <span className="tracking-[-0.25px]">{c}</span>
                  {c === "cat" && (
                    <svg width="16" height="16" viewBox="0 0 16 16" fill="none" stroke="#8a8a86" className="-mr-[3px] -mt-[2px] ml-[6px]">
                      <path d="M8 1l6.800 6.800-2 2L8 5 3.200 9.800l-2-2zM8 6.500l2.500 2.500M8 6.500L5.500 9" fill="#fff" /><circle cx="8" cy="10.5" r="1" /><circle cx="8" cy="14.3" r="1" />
                    </svg>
                  )}
                </div>
              ))}
              <div className="flex w-[120px] shrink-0 items-center pl-[20px] pt-[3px] tracking-[-0.25px] text-black">ZIPCODE</div>
            </div>
            <div className="w-[672px] overflow-hidden pt-[2px]">
              {rows.map((r) => (
                <div key={r[0]} className="flex h-[23px] w-[720px] border-b border-[#97938e] bg-[#3584e4] text-white">
                  {r.map((v, i) => (
                    <div key={i} className="-ml-px flex w-[120px] shrink-0 items-center justify-center border-r border-[#97938e] pb-[1px] tracking-[-0.45px] [&:not(:first-child)]:ml-0">{v}</div>
                  ))}
                </div>
              ))}
            </div>
          </div>
        </div>
      </div>
      <div className="ml-[9px] mt-[5px] h-[101px] w-[680px] shrink-0">
        <div className="flex h-[19px] items-center">
          <span className="h-full w-[75px] whitespace-nowrap bg-[#9fc9ad] pl-1 leading-[18px] tracking-[-0.2px] text-black">SQL Query</span>
          <span className="h-[10px] flex-1 self-end border-r border-t border-[#c9c5c0]" />
        </div>
        <div className="h-[82px] border border-t-0 border-[#c9c5c0] px-[3px] pt-[4px]">
          <div className="flex h-[28px] border-b border-[#c9c5c0] pl-[5px]">
            <span className="h-[28px] w-[67px] rounded-t-[4px] border border-b-0 border-[#c9c5c0] bg-white pl-[7px] font-bold leading-[25px] tracking-[0.1px] text-black">Simple</span>
            <span className="h-[25px] w-[66px] border-r border-[#c9c5c0] pl-[6px] leading-[27px] text-[#4b5052]">Builder</span>
          </div>
          <div className="h-[2px] bg-white" />
          <div className="mt-[5px] flex h-[34px] items-center">
            <span className="w-[273px] shrink-0 whitespace-nowrap pl-1 tracking-[-0.15px] text-[#1c1f20]">SELECT * FROM zipcodes_wake WHERE</span>
            <span className="flex h-[34px] w-[150px] shrink-0 overflow-hidden rounded-[5px] border border-[#cdc7c2] bg-white">
              <span className="flex flex-1 items-center pl-2 text-black">cat</span>
              <span className="flex w-[34px] items-center justify-center border-l border-[#cdc7c2] bg-gradient-to-b from-[#f9f8f7] to-[#edebe9]"><Tri /></span>
            </span>
            <span className="ml-[3px] flex h-[34px] w-[55px] shrink-0 items-center justify-between rounded-r-[5px] border border-l-0 border-[#cdc7c2] bg-gradient-to-b from-[#f9f8f7] to-[#edebe9] pl-[6px] pr-[12px] text-[#2e3436]"><span>&gt;</span><Tri /></span>
            <span className="ml-[3px] flex h-[34px] w-[99px] shrink-0 items-center rounded-[5px] border border-[#cdc7c2] bg-white pl-2 text-black">40</span>
            <span className="ml-[5px] flex h-[34px] w-[85px] shrink-0 items-center rounded-[5px] border border-[#cdc7c2] bg-gradient-to-b from-[#f9f8f7] to-[#edebe9] p-px text-[#2e3436]">
              <span className="flex h-full w-full items-center rounded-[4px] border border-dashed border-[#b8b5b1] pl-[9px]">
                <svg width="20" height="22" viewBox="0 0 20 22" className="mb-1"><path d="M1.500 12.500l4-3 3 5L14.500 2l4 1.500L10 19.500H7z" fill="#8fdc3c" stroke="#4c9a12" strokeWidth="1.2" /><path d="M4 12.500l4 4L16 4" stroke="#d3f7a5" fill="none" strokeWidth="1.3" /></svg>
                <span className="ml-[3px] mt-[2px]">Apply</span>
              </span>
            </span>
          </div>
        </div>
      </div>
      <div className="ml-[5px] mr-[12px] mt-[4px] h-[2px] shrink-0 bg-white" />
      <div className="ml-[5px] mr-[12px] flex h-[28px] shrink-0 border-t border-[#c9c5c0] pl-[5px] leading-[25px] text-[#3b4042]">
        <span className="-mt-px h-[28px] w-[107px] whitespace-nowrap rounded-b-[4px] border border-t-0 border-[#c9c5c0] bg-white pl-[7px] font-bold leading-[25px] tracking-normal text-black">Browse data</span>
        <span className="mt-px h-[26px] w-[123px] border-r border-[#c9c5c0] pl-[7px] leading-[22px]">Manage tables</span>
        <span className="mt-px h-[26px] w-[122px] border-r border-[#c9c5c0] pl-[7px] leading-[22px]">Manage layers</span>
      </div>
    </div>
    <div className="mt-[9px] flex gap-[10px] pl-[400px]">
      <Button>
        <svg width="16" height="14" viewBox="0 0 16 14" className="mr-[2px]"><path d="M0 7l5-6h11v12H5z" fill="#aeb2ae" /><path d="M7.500 4l5 6M12.500 4l-5 6" stroke="#fff" strokeWidth="1.8" /></svg>
        Clear
      </Button>
      <Button>
        <svg width="16" height="16" viewBox="0 0 16 16" fill="none" className="-mt-[2px] mr-[1px]"><path d="M12.800 12.500A6.500 6.500 0 1 1 12 3l1.500-2h1.500v6.500H8.500V6L10 4.800A4 4 0 1 0 11 11l1.800 1.500z" fill="#fff" stroke="#858885" strokeWidth="1.1" /></svg>
        Refresh
      </Button>
      <Button>Close</Button>
    </div>
    <div className="mt-[10px] flex flex-1 items-start justify-between pl-[9px] pr-[14px] text-[#2e3436]">
      <span className="leading-[23px]">Number of loaded records: 4</span>
      <svg width="18" height="18" viewBox="0 0 18 18" stroke="#a3a29e" strokeWidth="1.6" className="mt-[3px] block"><path d="M1 18L18 1M7 18L18 7M13 18l5-5" /></svg>
    </div>
  </div>
);

const menus: [string, string][] = [
  ["File", "w-[38px]"], ["Settings", "w-[69px]"], ["Raster", "w-[58px]"], ["Vector", "w-[58px]"], ["Imagery", "w-[70px]"],
  ["3D raster", "w-[76px]"], ["Database", "w-[78px]"], ["Temporal", "w-[76px]"], ["Help", "w-[40px]"],
];

export default function App() {
  return (
    <div className="relative h-[854px] w-[1513px] overflow-hidden bg-[#2c66d8] text-[13.333px] leading-[18px] tracking-[-0.18px] font-['DejaVu_Sans',sans-serif]">
      <div className="absolute right-0 top-[21px] h-[833px] w-[4px] bg-[#efeeec]" />
      <div className="relative flex h-[862px] w-[1512px] flex-col overflow-hidden rounded-t-[8px] border-r border-t-[1px] border-[#777572] bg-[#f6f5f3]">
        <div className="relative flex h-[30px] shrink-0 items-center justify-center pl-[4px]">
          <div className="absolute left-[5px] top-[3px]"><Logo /></div>
          <span className="mr-[73px] whitespace-nowrap text-[12px] font-bold tracking-[-0.1px] text-[#8b8e8f]">nc_spm_08_grass7/PERMANENT - GRASS GIS</span>
          <WindowButtons color="#8b8e8f" cls="absolute left-[1422px] top-[9px]" />
        </div>
        <div className="flex h-[22px] shrink-0 items-center pl-3 tracking-[-0.1px] text-[#929595]">
          {menus.map(([m, w]) => <span key={m} className={`${w} shrink-0 whitespace-nowrap`}>{m}</span>)}
        </div>
        <TopBar />
        <div className="ml-1 mr-[5px] flex h-[757px] shrink-0 bg-[#dddcda]">
          <div className="flex w-[465px] shrink-0 flex-col gap-[5px]">
            <Catalog />
            <Layers />
          </div>
          <MapPanel />
          <ConsoleArea />
        </div>
      </div>
      <Dialog />
      <svg width="1513" height="854" viewBox="0 0 1513 854" fill="none" className="pointer-events-none absolute left-0 top-0">
        <g stroke="#088b34" strokeWidth="5">
          <rect x="403.2" y="575.2" width="46.5" height="36.5" />
          <path d="M449 575L815 254M825 397L795 487" />
          <rect x="825.3" y="302.3" width="676.5" height="96" strokeWidth="4.5" />
          <path d="M1413 691.500L1440 659" />
        </g>
        <path d="M828.500 239l-27 10.500 14 16zM786 480l18 7-17.300 23zM1454.500 641.500l-25 15 16.500 12z" fill="#088b34" />
      </svg>
    </div>
  );
}
